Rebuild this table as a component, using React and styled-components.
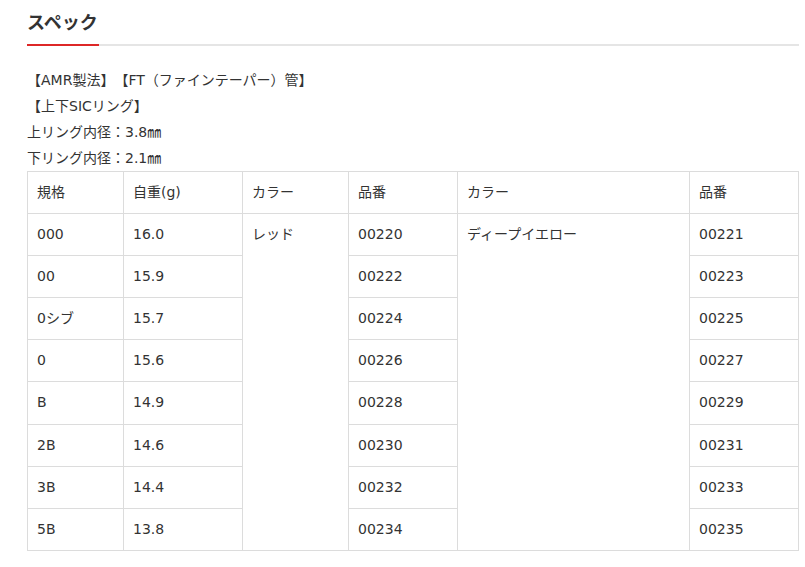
import React from 'react'
import styled, { createGlobalStyle } from "styled-components";

const GlobalStyle = createGlobalStyle`
    body {
        margin: 0;
        background: #fff;
        font-family: "DejaVu Sans", "Noto Sans CJK JP", sans-serif;
        color: #333;
        text-spacing-trim: space-all;
    }
`

const rows = [
    ['000', '16.0', '00220', '00221'],
    ['00', '15.9', '00222', '00223'],
    ['0シブ', '15.7', '00224', '00225'],
    ['0', '15.6', '00226', '00227'],
    ['B', '14.9', '00228', '00229'],
    ['2B', '14.6', '00230', '00231'],
    ['3B', '14.4', '00232', '00233'],
    ['5B', '13.8', '00234', '00235'],
]

const widths = [96, 119, 106, 109, 232, 109]

const App = () => {
    return(
        <Section>
            <GlobalStyle />
            <Heading>
                <HeadingText>スペック</HeadingText>
            </Heading>
            <Notes>
                <Note>【AMR製法】【FT（ファインテーパー）管】</Note>
                <Note>【上下SICリング】</Note>
                <Note>上リング内径：3.8㎜</Note>
                <Note>下リング内径：2.1㎜</Note>
            </Notes>
            <SpecTable>
                <colgroup>
                    {widths.map((w, i) => <Col key={i} $w={w} />)}
                </colgroup>
                <tbody>
                    <tr>
                        <Cell>規格</Cell>
                        <Cell>自重(g)</Cell>
                        <Cell>カラー</Cell>
                        <Cell>品番</Cell>
                        <Cell>カラー</Cell>
                        <Cell>品番</Cell>
                    </tr>
                    {rows.map((r, i) => (
                        <tr key={r[0]}>
                            <Cell>{r[0]}</Cell>
                            <Cell>{r[1]}</Cell>
                            {i === 0 && <Cell rowSpan={rows.length}>レッド</Cell>}
                            <Cell>{r[2]}</Cell>
                            {i === 0 && <Cell rowSpan={rows.length}>ディープイエロー</Cell>}
                            <Cell>{r[3]}</Cell>
                        </tr>
                    ))}
                </tbody>
            </SpecTable>
        </Section>
    );
}

export default App;

const Section = styled.div`
    width: 772px;
    padding: 0 0 0 27px;
`

const Heading = styled.div`
    height: 44px;
    border-bottom: 2px solid #e5e5e5;
`

const HeadingText = styled.h2`
    display: inline-block;
    box-sizing: border-box;
    width: 72px;
    height: 46px;
    margin: 0 0 -2px;
    padding-top: 9px;
    font-family: "Noto Sans CJK JP", sans-serif;
    font-size: 18px;
    line-height: 24px;
    font-weight: 700;
    color: #333;
    border-bottom: 2px solid #dd2727;
`

const Notes = styled.div`
    padding-top: 21px;
`

const Note = styled.p`
    margin: 0;
    font-size: 14px;
    line-height: 26px;
`

const SpecTable = styled.table`
    border-collapse: collapse;
    table-layout: fixed;
    width: 772px;
    font-size: 14px;
`

const Col = styled.col`
    width: ${(p) => p.$w}px;
`

const Cell = styled.td`
    border: 1px solid #dcdcdc;
    padding: 10px 9px;
    line-height: 21.1px;
    vertical-align: top;
    text-align: left;
`
